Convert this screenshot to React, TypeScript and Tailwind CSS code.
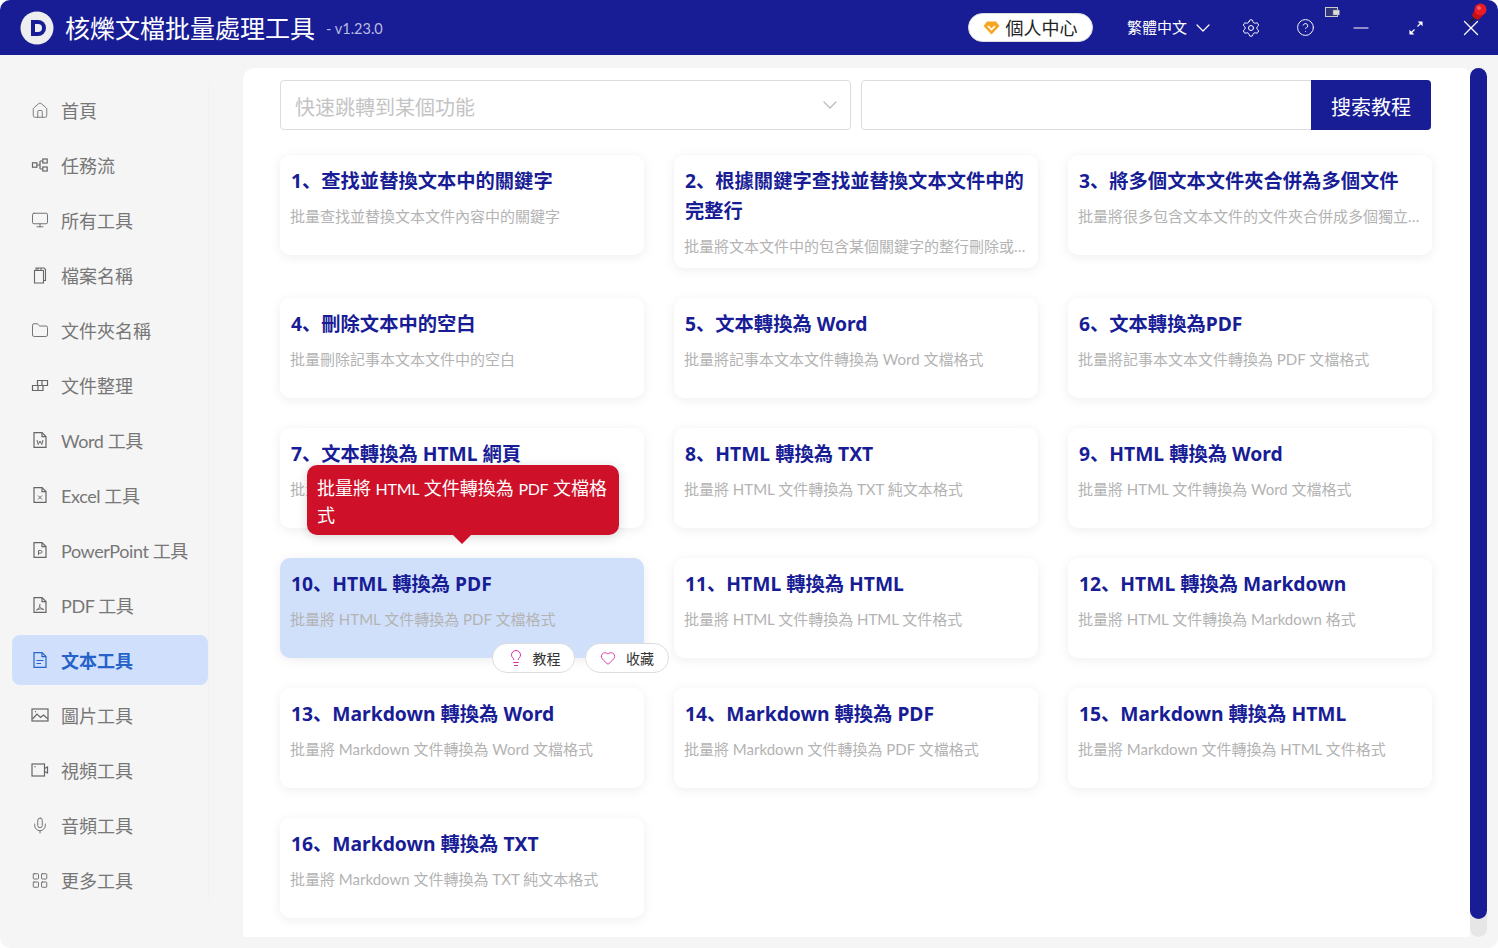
import { ChevronDown, Heart, Lightbulb, Minus, Settings, CircleHelp, X, House, Monitor, Folder, Mic, LayoutGrid } from 'lucide-react';
import type { ReactNode } from 'react';

const FONT = 'Lato, "Noto Sans CJK SC", sans-serif';
const TITLE_FONT = '"Noto Sans", "Noto Sans CJK SC", sans-serif';

// small document outline shared by the office icons
function DocIcon({ children }: { children?: ReactNode }) {
  return (
    <svg width="18" height="18" viewBox="0 0 18 18" fill="none" stroke="currentColor" strokeWidth="1.2">
      <path d="M3 1.6h8l4 4v10.8H3z" />
      <path d="M11 1.6v4h4" />
      {children}
    </svg>
  );
}

function FlowIcon() {
  return (
    <svg width="18" height="18" viewBox="0 0 18 18" fill="none" stroke="currentColor" strokeWidth="1.2">
      <rect x="1.5" y="6.8" width="4.4" height="4.4" />
      <rect x="11.8" y="3" width="4.4" height="4" />
      <rect x="11.8" y="11" width="4.4" height="4" />
      <path d="M6 9h3M9 5h2.800M9 13h2.800M9 5v8" />
    </svg>
  );
}

function FilesIcon() {
  return (
    <svg width="18" height="18" viewBox="0 0 18 18" fill="none" stroke="currentColor" strokeWidth="1.100">
      <path d="M3.500 4.500h1.500V2h8l1.500 1.500v11h-2v2.500H3.500z" />
      <path d="M5 4.500h7.500V14.500M7 2v2.500M10 2v2.500" />
    </svg>
  );
}

function SortIcon() {
  return (
    <svg width="18" height="18" viewBox="0 0 18 18" fill="none" stroke="currentColor" strokeWidth="1.200">
      <path d="M1.500 9.500h5.500v5H1.500zM7 9.500h5V14.500H7zM6.500 9.500V4.500h10v5H12M11 4.500v5" />
    </svg>
  );
}

function PictureIcon() {
  return (
    <svg width="18" height="18" viewBox="0 0 18 18" fill="none" stroke="currentColor" strokeWidth="1.200">
      <rect x="1" y="3" width="16" height="12" />
      <path d="M1.500 13l4.500-5 3.500 3.500 3-2.500 4.500 4" />
      <circle cx="4.500" cy="5.800" r=".7" fill="currentColor" stroke="none" />
    </svg>
  );
}

function CameraIcon() {
  return (
    <svg width="18" height="18" viewBox="0 0 18 18" fill="none" stroke="currentColor" strokeWidth="1.200">
      <rect x="1" y="3" width="12.500" height="12" />
      <path d="M13.500 7.500l3-1.500v6l-3-1.500" />
      <circle cx="4" cy="5.800" r=".7" fill="currentColor" stroke="none" />
    </svg>
  );
}

const side: { label: string; icon: ReactNode; active?: boolean; latin?: boolean }[] = [
  { label: '首頁', icon: <House size={23} strokeWidth={1.1} /> },
  { label: '任務流', icon: <FlowIcon /> },
  { label: '所有工具', icon: <Monitor size={20} strokeWidth={1.2} /> },
  { label: '檔案名稱', icon: <FilesIcon /> },
  { label: '文件夾名稱', icon: <Folder size={19} strokeWidth={1.2} /> },
  { label: '文件整理', icon: <SortIcon /> },
  { label: 'Word 工具', latin: true, icon: <DocIcon><path d="M6 9l1.200 4.500L9 10l1.800 3.500L12 9" strokeWidth="1" /></DocIcon> },
  { label: 'Excel 工具', latin: true, icon: <DocIcon><path d="M7 9.500l4 4M11 9.500l-4 4" strokeWidth="1" /></DocIcon> },
  { label: 'PowerPoint 工具', latin: true, icon: <DocIcon><path d="M7.500 14V9.500h2.200a1.300 1.300 0 010 2.600H7.500" strokeWidth="1" /></DocIcon> },
  { label: 'PDF 工具', latin: true, icon: <DocIcon><path d="M9 8c0 3-1.500 5-3.500 6M9 10.500c.8 1.500 2 2.500 3.800 3M5.500 14c2-1.200 5-1.500 7.300-.5" strokeWidth="1" /></DocIcon> },
  { label: '文本工具', active: true, icon: <DocIcon><path d="M5.500 9.500h7M5.500 12.500h4.500" /></DocIcon> },
  { label: '圖片工具', icon: <PictureIcon /> },
  { label: '視頻工具', icon: <CameraIcon /> },
  { label: '音頻工具', icon: <Mic size={21} strokeWidth={1.2} /> },
  { label: '更多工具', icon: <LayoutGrid size={19} strokeWidth={1.2} /> },
];

const tools = [
  { t: '1、查找並替換文本中的關鍵字', d: '批量查找並替換文本文件內容中的關鍵字' },
  { t: '2、根據關鍵字查找並替換文本文件中的完整行', d: '批量將文本文件中的包含某個關鍵字的整行刪除或替換為其他內容' },
  { t: '3、將多個文本文件夾合併為多個文件', d: '批量將很多包含文本文件的文件夾合併成多個獨立的文本文件' },
  { t: '4、刪除文本中的空白', d: '批量刪除記事本文本文件中的空白' },
  { t: '5、文本轉換為 Word', d: '批量將記事本文本文件轉換為 Word 文檔格式' },
  { t: '6、文本轉換為PDF', d: '批量將記事本文本文件轉換為 PDF 文檔格式' },
  { t: '7、文本轉換為 HTML 網頁', d: '批量將記事本文本文件轉換為 HTML 網頁' },
  { t: '8、HTML 轉換為 TXT', d: '批量將 HTML 文件轉換為 TXT 純文本格式' },
  { t: '9、HTML 轉換為 Word', d: '批量將 HTML 文件轉換為 Word 文檔格式' },
  { t: '10、HTML 轉換為 PDF', d: '批量將 HTML 文件轉換為 PDF 文檔格式', hover: true },
  { t: '11、HTML 轉換為 HTML', d: '批量將 HTML 文件轉換為 HTML 文件格式' },
  { t: '12、HTML 轉換為 Markdown', d: '批量將 HTML 文件轉換為 Markdown 格式' },
  { t: '13、Markdown 轉換為 Word', d: '批量將 Markdown 文件轉換為 Word 文檔格式' },
  { t: '14、Markdown 轉換為 PDF', d: '批量將 Markdown 文件轉換為 PDF 文檔格式' },
  { t: '15、Markdown 轉換為 HTML', d: '批量將 Markdown 文件轉換為 HTML 文件格式' },
  { t: '16、Markdown 轉換為 TXT', d: '批量將 Markdown 文件轉換為 TXT 純文本格式' },
];

function Card({ t, d, hover }: { t: string; d: string; hover?: boolean }) {
  return (
    <div className={`relative min-h-[100px] rounded-[10px] px-[11px] pt-[11px] pb-[12px] shadow-[0_2px_12px_rgba(0,0,0,0.07)] ${hover ? 'bg-[#d0e0fb]' : 'bg-white'}`}>
      <div className="text-[19.3px] leading-[30px] font-bold text-[#181d96]" style={{ fontFamily: TITLE_FONT }}>{t}</div>
      <div className="mt-[10px] -ml-px truncate text-[15px] leading-[20px] text-[#b3b3b3]">{d}</div>
      {hover && (
        <>
          <div className="absolute bottom-[calc(100%+23px)] left-[27px] z-10 w-[312px] rounded-[10px] bg-[#cf1029] px-[10px] pt-[10px] pb-[6px] text-[18px] leading-[27px] text-white shadow-[0_2px_12px_rgba(0,0,0,0.15)]">
            批量將 <span className="text-[16px] tracking-[-0.3px]">HTML</span> 文件轉換為 <span className="text-[16px] tracking-[-0.3px]">PDF</span> 文檔格式
            <div className="absolute top-full left-[calc(50%-1px)] h-0 w-0 -translate-x-1/2 border-x-[9px] border-t-[9px] border-x-transparent border-t-[#cf1029]" />
          </div>
          <div className="absolute top-[85px] left-[212px] z-10 flex gap-[10px]">
            <div className="flex h-[30px] w-[83px] items-center justify-center gap-[8px] rounded-full border border-[#ddd] bg-white text-[14px] text-[#333]">
              <Lightbulb size={18} strokeWidth={1.300} className="text-[#d6249f]" />
              教程
            </div>
            <div className="flex h-[30px] w-[84px] items-center justify-center gap-[10px] rounded-full border border-[#ddd] bg-white text-[14px] text-[#333]">
              <Heart size={16} strokeWidth={1.300} className="text-[#d6249f]" />
              收藏
            </div>
          </div>
        </>
      )}
    </div>
  );
}

export default function App() {
  return (
    <div className="flex h-[948px] w-[1498px] flex-col overflow-hidden rounded-[10px] bg-[#f5f5f5]" style={{ fontFamily: FONT }}>
      <header className="relative flex h-[55px] shrink-0 items-center bg-[#181d96] pl-[20px] text-white">
        <svg width="34" height="34" viewBox="0 0 34 34">
          <circle cx="17" cy="17" r="16.500" fill="#eeeeee" />
          <path d="M11 9h7a8 8 0 010 16h-7z" fill="#181d96" />
          <path d="M15 13h3a4 4 0 010 8h-3z" fill="#eeeeee" />
        </svg>
        <span className="ml-[11px] pt-[2px] text-[25px]">核爍文檔批量處理工具</span>
        <span className="ml-[11px] pt-[2px] text-[14.5px] text-[#b9bbe0]">- v1.23.0</span>
        <div className="ml-auto flex items-center">
          <div className="flex h-[29px] w-[125px] items-center justify-center gap-[5px] rounded-full border border-[#ddd] bg-white pt-[1px] text-[18px] text-[#222]">
            <svg width="17" height="14" viewBox="0 0 17 14">
              <path d="M4 .5h9l3.500 4.500L8.500 13.500.5 5z" fill="#f5a623" />
              <path d="M5 5l3.500 3.500L12 5" fill="none" stroke="#fff" strokeWidth="1.600" />
            </svg>
            個人中心
          </div>
          <div className="ml-[34px] flex items-center gap-[4px] text-[15px]">
            繁體中文
            <ChevronDown size={24} strokeWidth={1.200} />
          </div>
          <div className="ml-[8px] flex w-[55px] justify-center"><Settings size={20} strokeWidth={1.200} /></div>
          <div className="flex w-[55px] justify-center"><CircleHelp size={19} strokeWidth={1.200} /></div>
          <div className="flex w-[55px] justify-center"><Minus size={24} strokeWidth={1.200} /></div>
          <div className="flex w-[55px] justify-center">
            <svg width="16" height="16" viewBox="0 0 16 16" fill="none" stroke="#fff" strokeWidth="1.100">
              <path d="M9.500 6.500L13.500 2.500M2.500 13.500L6.500 9.500" />
              <path d="M11 2h3v3zM2 11v3h3z" fill="#fff" />
            </svg>
          </div>
          <div className="flex w-[55px] justify-center"><X size={26} strokeWidth={1.200} /></div>
        </div>
        {/* window tray overlays */}
        <svg className="absolute top-[7px] left-[1325px]" width="15" height="11" viewBox="0 0 15 11">
          <rect x=".5" y=".5" width="12" height="9" fill="#30367a" stroke="#cccccc" />
          <rect x="8" y="3" width="6.500" height="5" fill="#dddddd" stroke="#777777" strokeWidth=".5" />
        </svg>
        <svg className="absolute top-[3px] left-[1468px]" width="20" height="21" viewBox="0 0 20 21">
          <path d="M1.500 20l5-5" stroke="#222222" strokeWidth="1.800" />
          <path d="M4 12l4-7 8 6-5 5.500c-3 .5-6-1.500-7-4.500z" fill="#c50f17" />
          <circle cx="12.500" cy="6.500" r="6" fill="#ed1c24" />
          <circle cx="11" cy="5" r="2" fill="#f4616a" />
        </svg>
      </header>

      <div className="flex min-h-0 flex-1">
        <aside className="w-[243px] shrink-0 pt-[30px] pl-[12px]">
          <div className="flex h-[814px] w-[197px] flex-col gap-[5px] border-r border-[#f0f0f0]">
            {side.map((s) => (
              <div
                key={s.label}
                className={`flex h-[50px] w-[196px] shrink-0 items-center gap-[12px] rounded-[8px] pl-[19px] text-[18px] ${s.active ? 'bg-[#d0e0fc] font-bold text-[#2563c8]' : 'text-[#777777]'}`}
              >
                <span className={`flex w-[18px] shrink-0 justify-center ${s.active ? 'text-[#2563c8]' : 'text-[#666666]'}`}>{s.icon}</span>
                <span className={`pt-[2px] ${s.latin ? 'tracking-[-0.4px]' : ''}`}>{s.label}</span>
              </div>
            ))}
          </div>
        </aside>

        <main className="mt-[13px] mb-[11px] flex min-w-0 flex-1 pr-[11px]">
          <div className="flex-1 rounded-tl-[12px] rounded-tr-[8px] bg-white pt-[12px] pr-[38px] pl-[37px]">
            <div className="mr-px flex h-[50px] gap-[10px]">
              <div className="flex w-[571px] items-center justify-between rounded-[4px] border border-[#dcdcdc] pr-[14px] pl-[14px] text-[20px] text-[#c4c4c4]">
                <span className="pt-[4px]">快速跳轉到某個功能</span>
                <ChevronDown size={24} strokeWidth={1.200} className="-mr-[6px] text-[#bbbbbb]" />
              </div>
              <div className="flex flex-1 rounded-[4px] border border-[#dcdcdc]">
                <div className="flex-1" />
                <div className="-my-px -mr-px flex w-[120px] items-center justify-center rounded-r-[4px] bg-[#181d96] pt-[4px] text-[20px] text-white">搜索教程</div>
              </div>
            </div>
            <div className="mt-[25px] grid grid-cols-3 items-start gap-x-[30px] gap-y-[30px]">
              {tools.map((c) => (
                <Card key={c.t} {...c} />
              ))}
            </div>
          </div>
          <div className="relative w-[17px] shrink-0 rounded-full bg-[#e6e6e6]">
            <div className="h-[851px] rounded-full bg-[#181d96]" />
          </div>
        </main>
      </div>
    </div>
  );
}
